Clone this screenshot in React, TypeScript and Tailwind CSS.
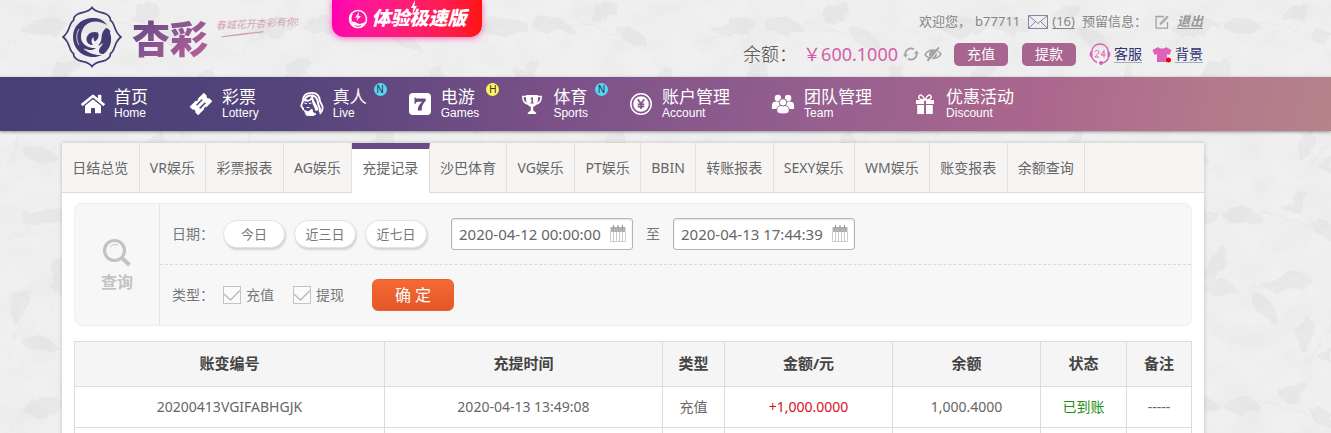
import { useState } from 'react';
import type { ReactNode } from 'react';
import { FaHome, FaEyeSlash } from 'react-icons/fa';

const HomeIcon = () => <FaHome className="h-6 w-6" />;

const TicketIcon = () => (
  <svg viewBox="0 0 24 24" className="h-6 w-6">
    <g transform="rotate(-45 12 12)">
      <path
        fill="currentColor"
        fillRule="evenodd"
        d="M2 6h8.500a1.600 1.600 0 0 0 3 0H22v4.200a1.900 1.900 0 0 0 0 3.600V18h-8.500a1.600 1.600 0 0 0-3 0H2v-4.200a1.900 1.900 0 0 0 0-3.600zM8 9v1.500h8V9zm0 4.400v1.500h8v-1.500z"
      />
    </g>
  </svg>
);

const LadyIcon = () => (
  <svg viewBox="0 0 26 28" className="h-[26px] w-[26px]" fill="none" stroke="currentColor" strokeLinecap="round">
    <path d="M3 11C3 5 7 2 13 2c6 0 8 4 8.500 8 .5 4 3.500 5 3 9-.2 2-1.500 4-2.500 5" strokeWidth="2" />
    <path d="M5 10c1-4 5-5.500 9-5 4 .6 5 4 5.500 8s3 5 2 9" strokeWidth="2.200" />
    <path d="M6 10c3 1 6-.5 7-3 1 6 5 8 6 13" strokeWidth="2.200" />
    <path d="M3 11c-.5 3-2.500 4-1.200 6 .4 1.500 2 1 1.700 3M14 11c.5 4 3 6 3.500 9.500" strokeWidth="2" />
    <path d="M5 13l2 .5M10 13.500l2-.5M7.500 17.800h2.500" strokeWidth="1.200" />
    <path d="M5 21l4 1.500 4-3 .8 3.500 3.500 2-3 1.500-7-.2z" fill="currentColor" strokeWidth="1" />
  </svg>
);

const SevenIcon = () => (
  <svg viewBox="0 0 22 22" className="h-[22px] w-[22px]">
    <rect width="22" height="22" rx="4" fill="currentColor" />
    <path fill="#6b4a80" d="M5.500 4.500h1l.6 1h9.600v2.300c-3 2.900-4 5.600-4 9.700H8.700c0-4 2-6.400 4.500-8.800H8.500c-1 0-1.600.7-1.900 2H5.500z" />
  </svg>
);

const TrophyIcon = () => (
  <svg viewBox="0 0 22 22" className="h-[22px] w-[22px]" fill="currentColor">
    <path d="M5 2h12v4.500c0 4-2 6.500-4.800 7.300v3.400c0 1 2.300.8 3.300 3.800H6.500c1-3 3.300-2.800 3.300-3.800v-3.400C7 13 5 10.500 5 6.500z" />
    <path d="M5.500 3.500H1.800c0 4.500 2 7 5.200 7.500M16.500 3.500h3.700c0 4.500-2 7-5.200 7.500" fill="none" stroke="currentColor" strokeWidth="1.500" />
    <path d="M9.600 5.200l1.400-.9h.9v5.200h.9v.9H9.500v-.9h.9V5.800l-.8.300z" fill="#7b5188" />
  </svg>
);

const CoinIcon = () => (
  <svg viewBox="0 0 24 24" className="h-6 w-6">
    <circle cx="12" cy="12" r="10.200" fill="none" stroke="currentColor" strokeWidth="1.500" />
    <circle cx="12" cy="12" r="7.800" fill="currentColor" />
    <path d="M8.700 7.200l3.300 4.600 3.300-4.600M12 11.800v5.200M8.700 12.300h6.600M8.700 14.600h6.600" fill="none" stroke="#845589" strokeWidth="1.700" />
  </svg>
);

const TeamIcon = () => (
  <svg viewBox="0 0 26 22" className="h-[22px] w-6" fill="currentColor">
    <circle cx="7.500" cy="4.500" r="3.500" />
    <circle cx="18.500" cy="4.500" r="3.500" />
    <path d="M1 16.500V12c0-2.500 2-3.700 5-3.700 3.500 0 4 1 4 3.500v4.700zM25 16.500V12c0-2.500-2-3.700-5-3.700-3.500 0-4 1-4 3.500v4.700z" />
    <g stroke="#8f5a8f" strokeWidth="1">
      <path d="M6.300 18.500c0-4.500 2-6 6.700-6s6.700 1.500 6.700 6c0 2.200-3 3.200-6.700 3.200s-6.700-1-6.700-3.200z" />
      <circle cx="13" cy="9.200" r="4" />
    </g>
  </svg>
);

const GiftIcon = () => (
  <svg viewBox="0 0 20 22" className="h-[22px] w-5" fill="currentColor">
    <path d="M1 7h8v4H1zM11 7h8v4h-8zM2.200 12h6.800v9H2.200zM11 12h6.800v9H11z" />
    <path d="M9.600 7C4 7 3.300 4.800 4 3.200 5 1 8.500 1.800 9.600 7zM10.400 7c5.600 0 6.300-2.200 5.600-3.800C15 1 11.500 1.800 10.400 7z" fill="none" stroke="currentColor" strokeWidth="1.500" />
  </svg>
);

type NavItem = { title: string; sub: string; icon: ReactNode; tag?: 'N' | 'H' };

const navItems: NavItem[] = [
  { title: '首页', sub: 'Home', icon: <HomeIcon /> },
  { title: '彩票', sub: 'Lottery', icon: <TicketIcon /> },
  { title: '真人', sub: 'Live', icon: <LadyIcon />, tag: 'N' },
  { title: '电游', sub: 'Games', icon: <SevenIcon />, tag: 'H' },
  { title: '体育', sub: 'Sports', icon: <TrophyIcon />, tag: 'N' },
  { title: '账户管理', sub: 'Account', icon: <CoinIcon /> },
  { title: '团队管理', sub: 'Team', icon: <TeamIcon /> },
  { title: '优惠活动', sub: 'Discount', icon: <GiftIcon /> },
];

const tabs = [
  '日结总览', 'VR娱乐', '彩票报表', 'AG娱乐', '充提记录', '沙巴体育', 'VG娱乐',
  'PT娱乐', 'BBIN', '转账报表', 'SEXY娱乐', 'WM娱乐', '账变报表', '余额查询',
];

const columns = [
  { label: '账变编号', width: 'w-[310px]' },
  { label: '充提时间', width: 'w-[278px]' },
  { label: '类型', width: 'w-[62px]' },
  { label: '金额/元', width: 'w-[168px]' },
  { label: '余额', width: 'w-[148px]' },
  { label: '状态', width: 'w-[86px]' },
  { label: '备注', width: 'w-[65px]' },
];

const records = [
  {
    id: '20200413VGIFABHGJK',
    time: '2020-04-13 13:49:08',
    type: '充值',
    amount: '+1,000.0000',
    balance: '1,000.4000',
    status: '已到账',
    remark: '-----',
  },
];

// pale leaves behind the whole page
const LeafBackground = () => (
  <svg className="absolute inset-0 -z-10 h-full w-full" aria-hidden="true">
    <defs>
      <filter id="marble" x="0" y="0" width="100%" height="100%">
        <feTurbulence type="fractalNoise" baseFrequency="0.03 0.04" numOctaves="5" seed="8" />
        <feColorMatrix values="0 0 0 0 0.6  0 0 0 0 0.6  0 0 0 0 0.6  0.9 0 0 0 -0.32" />
      </filter>
      <filter id="rough" x="0" y="0" width="100%" height="100%">
        <feTurbulence type="fractalNoise" baseFrequency="0.06" numOctaves="3" seed="3" />
        <feDisplacementMap in="SourceGraphic" scale="14" />
      </filter>
      <pattern id="leaves" width="230" height="190" patternUnits="userSpaceOnUse">
        <g fill="#e2e2e2">
          <path d="M20 30c14-18 36-16 50-4-16 12-36 14-50 4zM72 26c12-14 32-12 42 4-16 6-32 6-42-4z" />
          <path d="M132 20c2-12 12-20 26-16 0 14-12 22-26 16zM158 30c14-6 28 2 30 18-14 2-26-4-30-18z" />
          <path d="M52 92c-4-18 8-32 26-34 2 18-8 30-26 34zM50 96c12-10 30-8 38 4-14 8-30 8-38-4z" />
          <path d="M112 96c12-16 34-18 48-8-12 14-32 18-48 8zM104 104c14 0 22 12 20 26-14-2-22-12-20-26z" />
          <path d="M14 134c-8-14-2-28 12-36 8 14 4 28-12 36zM20 150c14-8 30-4 38 8-14 8-30 4-38-8z" />
          <path d="M152 162c-8-12-6-26 8-34 8 12 4 26-8 34zM166 166c8-12 26-14 38-4-8 12-24 14-38 4z" />
          <path d="M200 100c-8-14-4-28 10-34 8 12 4 26-10 34z" />
        </g>
        <path d="M10 50Q60 10 120 24T190 50M50 120Q60 90 84 56M90 100Q130 100 165 84M10 170Q20 130 30 94M150 180Q180 150 212 64" fill="none" stroke="#e6e6e6" strokeWidth="1.500" />
      </pattern>
    </defs>
    <rect width="100%" height="100%" fill="#f0f0f0" />
    <g filter="url(#rough)" opacity="0.500">
      <rect width="100%" height="100%" fill="url(#leaves)" />
    </g>
    <rect width="100%" height="100%" filter="url(#marble)" opacity="0.300" />
  </svg>
);

const Emblem = () => (
  <svg viewBox="0 0 60 62" className="h-[62px] w-[60px]" fill="none">
    <path
      stroke="#453a74"
      strokeWidth="1.700"
      d="M30 1.500C34 7 39 5.500 44 8c3 1.500 4.500 4 4.500 6.500 5 3 3 11 10.500 16.500-7.500 5.500-5.500 13.500-10.500 16.500 0 2.500-1.500 5-4.500 6.500-5 2.500-10 1-14 6.500-4-5.500-9-4-14-6.500-3-1.500-4.500-4-4.500-6.500C6.500 44.500 8.500 36.500 1 31c7.500-5.500 5.500-13.500 10.500-16.500 0-2.500 1.500-5 4.500-6.500 5-2.500 10-1 14-6.500z"
    />
    <path
      fill="#453a74"
      d="M45 19C41 13 35 11.500 29 12 18 13 11 21 11 31c0 11 8 19 18 20 4 .3 8-.5 11-2-8 .5-14-2-18-7 5 3 9 2.500 12 0-7 .5-12-2.500-14.500-7.500-2-9 2.500-16.500 10-18.500 5-1.500 10 0 15.500 3z"
    />
    <path
      fill="#453a74"
      d="M36 26.500c-6-2-12 1.500-11.500 7.500.5 3 3 5 6.500 5-2-2.500-2-6 .5-8-.2 2 .3 3.500 1.500 4.500 3-2 4.500-5 3-9z"
    />
    <path
      fill="#453a74"
      d="M44 22c2.500.5 4 2 4.300 3.500-.8 1.500.4 3 .7 5 .8 7-2 13.500-7.500 17.500-3 .5-5-1-4.500-4 .8-3 3-4 4-7-2 1.200-3.500 3-5 2.500 2-2 3.500-4.500 3.500-8 .2-4 1.500-7 4.500-9.500z"
    />
    <path d="M22 43c5 4 10 5 15 2M17 23c-3 5-3 11 0 16" stroke="#efeff1" strokeWidth="0.800" />
  </svg>
);

const Header = () => (
  <header className="flex h-[77px] shrink-0 items-start pr-32 pl-[62px]">
    <a href="#" className="flex shrink-0 items-start" aria-label="杏彩">
      <span className="pt-[6px]">
        <Emblem />
      </span>
      <span className="ml-[10px] bg-linear-to-br from-[#50407a] via-[#8a5590] to-[#c0629c] bg-clip-text pt-3 text-[38px] leading-[52px] font-black text-transparent">
        杏彩
      </span>
      <span className="mt-[17px] ml-2 flex w-[86px] -rotate-3 flex-col font-['Liberation_Serif','Noto_Sans_CJK_SC',serif] text-[10px] leading-[14px] text-[#d3a3b4] italic">
        春城花开杏彩有你!
        <svg viewBox="0 0 44 5" className="ml-1 h-[5px] w-11">
          <path d="M1 4C14 2 28 1.500 43 1 30 2.500 16 2.500 1 4z" fill="#d3a3b4" stroke="#d3a3b4" />
        </svg>
      </span>
    </a>

    <a
      href="#"
      className="ml-[30px] flex h-[37px] w-[150px] shrink-0 items-center justify-center gap-1 rounded-b-xl bg-linear-to-r from-[#ff00b0] to-[#ff1408] text-[19px] font-black text-white italic shadow-[0_1px_6px_#ff5db8]"
    >
      <svg viewBox="0 0 20 20" className="h-5 w-5">
        <circle cx="10" cy="10" r="8.500" fill="none" stroke="#fff" strokeWidth="1.500" />
        <path d="M2 13c3-1 5 0 8 1.500S16 13 18 13c-1 4-4 6-8 6s-7-2-8-6z" fill="#fff" />
        <path d="M3 4c-2 3-2.500 6-1 9l2-1c-1-3-.5-5 1-7z" fill="#fff" />
        <path d="M11 3L7 8.500h2.500L8.500 12 13 7h-2.500z" fill="#fff" />
        <path d="M7 16.500c2 1 4 1 6 0" stroke="#ff1a90" fill="none" />
      </svg>
      <span className="relative">
        体验极速版
        <svg viewBox="0 0 8 16" className="absolute -top-1 left-[38px] h-4 w-2" fill="#fff">
          <path d="M5 0L1 8h2.500L2 15l5-9H4.500z" />
        </svg>
      </span>
    </a>

    <div className="ml-auto flex shrink-0 flex-col items-end pt-3">
      <div className="flex h-5 items-center text-[13px] text-[#858585]">
        <span>欢迎您，</span>
        <span className="mr-2 ml-1">b77711</span>
        <a href="#" className="mr-[7px] flex items-center gap-1">
          <svg viewBox="0 0 20 14" className="h-[14px] w-5" fill="none" stroke="#8583a8">
            <path d="M.5.5h19v13H.5zM.5.5L10 8.500l9.500-8M.5 13.500l7-7M19.500 13.500l-7-7" />
          </svg>
          <span className="underline underline-offset-2">(16)</span>
        </a>
        <span>预留信息：</span>
        <a href="#" aria-label="编辑" className="mx-2">
          <svg viewBox="0 0 14 14" className="h-[14px] w-[14px]" fill="none" stroke="#a2a2a2" strokeWidth="1.300">
            <path d="M9 1.500H1v11.700h11.500V7" />
            <path d="M5 9.500l.6-2.200L12 1l1.300 1.300-6.200 6.500z" fill="#b5b5b5" strokeWidth="0.800" />
          </svg>
        </a>
        <a href="#" className="font-bold text-[#979797] italic underline underline-offset-2">
          退出
        </a>
      </div>
      <div className="mt-2 flex h-7 items-center">
        <span className="text-[18px] font-light text-[#444]">余额：</span>
        <span className="ml-[6px] text-[18px] text-[#d55ea8]">￥600.1000</span>
        <button type="button" aria-label="刷新" className="ml-[5px]">
          <svg viewBox="0 0 16 16" className="h-4 w-4" fill="none" stroke="#a3a3a3" strokeWidth="1.800">
            <path d="M2.500 9.500A5.700 5.700 0 0 1 11 3.300M13.500 6.500A5.700 5.700 0 0 1 5 12.700" />
            <path d="M0 8.500h5L2.500 11.500zM11 7.500h5L13.500 4.500z" fill="#a3a3a3" stroke="none" />
          </svg>
        </button>
        <button type="button" aria-label="隐藏余额" className="mr-3 ml-[5px]">
          <svg viewBox="0 0 18 16" className="h-4 w-[18px]" fill="none" stroke="#a3a3a3">
            <path d="M1 8.500C5 2.500 13 2.500 17 8c-4 6-12 6-16 .5z" strokeWidth="1.400" />
            <circle cx="9" cy="8.200" r="3.500" fill="#a3a3a3" />
            <path d="M3.500 15L15 1.500" strokeWidth="2" />
            <path d="M5 15.500L16.500 2" stroke="#f0f0f0" />
          </svg>
        </button>
        <button type="button" className="mr-[14px] h-[23px] w-[54px] rounded-[5px] bg-[#a8658f] text-sm leading-none text-white">
          充值
        </button>
        <button type="button" className="mr-[13px] h-[23px] w-[54px] rounded-[5px] bg-[#a8658f] text-sm leading-none text-white">
          提款
        </button>
        <a href="#" className="mr-[10px] flex items-center gap-[3px] text-sm leading-4 text-[#2e3273]">
          <svg viewBox="0 0 22 22" className="h-[22px] w-[22px]" fill="none" stroke="#d95fb4">
            <path d="M3 8C3.500 3.500 7 1 11 1s7.500 2.500 8 7M19.500 14.500c-1 3.500-3.500 5-6.500 5.500M3 14.500C4 17 5.500 18.500 8 19.500" strokeWidth="1.400" />
            <path d="M3 8C.5 8.500.5 14 3 14.500zM19 8c2.500.5 2.500 6 0 6.500z" fill="#d95fb4" />
            <circle cx="12" cy="20" r="1.500" fill="#d95fb4" />
            <path d="M6 9c0-2 4-2 4 0 0 1.500-3 3-4 5h4M15 14.500V7.500l-3 4.500h4.500" />
          </svg>
          <span className="border-b border-[#a8a8b8]">客服</span>
        </a>
        <a href="#" className="flex items-center gap-[3px] text-sm leading-4 text-[#2e3273]">
          <svg viewBox="0 0 20 17" className="h-[17px] w-5">
            <path d="M6 1c1.500 2 6.500 2 8 0l5.500 3-2 5-2.500-1v8H5V8L2.500 9l-2-5z" fill="#dd63b8" />
            <circle cx="16.500" cy="14" r="2.500" fill="#e60012" />
          </svg>
          <span className="border-b border-[#a8a8b8]">背景</span>
        </a>
      </div>
    </div>
  </header>
);

const Nav = () => (
  <nav className="flex h-[54px] shrink-0 items-center gap-[41px] bg-[linear-gradient(100deg,#474077_0%,#54447a_22%,#7b5188_42%,#96608f_62%,#ab678e_78%,#b3788c_90%,#b5838a_100%)] pl-[81px] text-white shadow-[0_1px_3px_rgba(0,0,0,0.4)]">
    {navItems.map((item) => (
      <a key={item.sub} href="#" className="relative flex shrink-0 items-center gap-[9px]">
        <span className="flex w-6 items-center justify-center">{item.icon}</span>
        <span className="flex flex-col">
          <span className="text-[17px] leading-[18px]">{item.title}</span>
          <span className="font-['Liberation_Sans',sans-serif] text-xs leading-[14px]">{item.sub}</span>
        </span>
        {item.tag && (
          <span
            className={`absolute -top-[5px] left-full ml-[7px] flex h-[13px] w-[13px] items-center justify-center rounded-full font-['Liberation_Sans',sans-serif] text-[10px] leading-none text-[#333] ${
              item.tag === 'N' ? 'bg-[#57d3f5]' : 'bg-[#fcf75a]'
            }`}
          >
            {item.tag}
          </span>
        )}
      </a>
    ))}
  </nav>
);

const DateField = ({ label, value, onChange }: { label: string; value: string; onChange: (v: string) => void }) => (
  <span className="relative">
    <input
      type="text"
      aria-label={label}
      value={value}
      onChange={(e) => onChange(e.target.value)}
      className="h-8 w-[182px] rounded-[3px] border border-[#b4b4b4] bg-white px-[7px] text-[15px] text-[#666] shadow-[inset_0_1px_2px_#e4e4e4]"
    />
    <svg viewBox="0 0 16 17" className="absolute top-[7px] right-[7px] h-[17px] w-4">
      <path d="M.5 2h15v5H.5z" fill="#b2b2b2" />
      <path d="M3.500 0v4M8 0v4M12.500 0v4" stroke="#999" strokeWidth="1.200" />
      <path d="M.5 7v9.500h15V7M3.500 7v9M6.500 7v9M9.500 7v9M12.500 7v9" fill="none" stroke="#cdcdcd" />
    </svg>
  </span>
);

const CheckField = ({ label }: { label: string }) => {
  const [checked, setChecked] = useState(true);
  return (
    <label className="flex items-center gap-[5px]">
      <span className="relative h-[18px] w-[18px]">
        <input
          type="checkbox"
          checked={checked}
          onChange={(e) => setChecked(e.target.checked)}
          className="block h-[18px] w-[18px] appearance-none border border-[#c4c4c4] bg-[#fafafa]"
        />
        {checked && (
          <svg viewBox="0 0 18 18" className="pointer-events-none absolute inset-0 h-[18px] w-[18px]">
            <path d="M1 8l6.500 6L17 4.500" fill="none" stroke="#b9b9b9" strokeWidth="1.300" />
          </svg>
        )}
      </span>
      {label}
    </label>
  );
};

const SearchPanel = () => {
  const [from, setFrom] = useState('2020-04-12 00:00:00');
  const [to, setTo] = useState('2020-04-13 17:44:39');

  return (
    <form className="flex rounded-lg border border-[#eee] bg-[#f7f7f7] text-sm text-[#777]" onSubmit={(e) => e.preventDefault()}>
      <div className="flex w-[85px] shrink-0 flex-col items-center justify-center border-r border-[#e4e4e4] text-base leading-5 font-bold text-[#c3c3c3]">
        <svg viewBox="0 0 30 30" className="mb-1 h-[30px] w-[30px]" fill="none" stroke="#c3c3c3">
          <circle cx="12.500" cy="12.500" r="10" strokeWidth="3.200" />
          <path d="M20 20l7.500 7" strokeWidth="4" />
          <path d="M8 9c2-2.500 5-3 8-2" />
        </svg>
        查询
      </div>
      <div className="grow">
        <div className="flex h-[61px] items-center border-b border-dashed border-[#d9d9d9] pl-3">
          <span className="mr-[9px]">日期：</span>
          <div className="mr-6 flex gap-[9px] text-[13px]">
            {['今日', '近三日', '近七日'].map((day) => (
              <button
                key={day}
                type="button"
                className="h-7 w-[62px] rounded-full border border-[#e2e2e2] bg-white shadow-[1px_2px_2px_#d2d2d2]"
              >
                {day}
              </button>
            ))}
          </div>
          <DateField label="开始时间" value={from} onChange={setFrom} />
          <span className="mx-[13px]">至</span>
          <DateField label="结束时间" value={to} onChange={setTo} />
        </div>
        <div className="flex h-[60px] items-center pl-3">
          <span className="mr-[9px]">类型：</span>
          <div className="mr-7 flex gap-[19px]">
            <CheckField label="充值" />
            <CheckField label="提现" />
          </div>
          <button
            type="submit"
            className="h-8 w-[82px] rounded-md border border-[#e8622f] bg-linear-to-b from-[#f56a33] to-[#e45628] text-base leading-none text-white"
          >
            确 定
          </button>
        </div>
      </div>
    </form>
  );
};

const RecordTable = () => (
  <table className="w-full table-fixed border-collapse text-center text-sm text-[#666]">
    <thead>
      <tr className="h-[45px] bg-[#f5f5f5] text-[15px] text-[#444]">
        {columns.map((col) => (
          <th key={col.label} className={`border border-[#dcdcdc] font-bold ${col.width}`}>
            {col.label}
          </th>
        ))}
      </tr>
    </thead>
    <tbody>
      {records.map((row) => (
        <tr key={row.id} className="h-[41px]">
          <td className="border border-[#dcdcdc]">{row.id}</td>
          <td className="border border-[#dcdcdc]">{row.time}</td>
          <td className="border border-[#dcdcdc]">{row.type}</td>
          <td className="border border-[#dcdcdc] text-[#d2121a]">{row.amount}</td>
          <td className="border border-[#dcdcdc]">{row.balance}</td>
          <td className="border border-[#dcdcdc] text-[#1f8f12]">{row.status}</td>
          <td className="border border-[#dcdcdc]">{row.remark}</td>
        </tr>
      ))}
      <tr className="h-[41px]">
        {columns.map((col) => (
          <td key={col.label} className="border border-[#dcdcdc]" />
        ))}
      </tr>
    </tbody>
  </table>
);

export default function App() {
  const [active, setActive] = useState('充提记录');

  return (
    <div className="relative isolate flex h-screen flex-col overflow-hidden font-['Noto_Sans','Noto_Sans_CJK_SC',sans-serif]">
      <LeafBackground />
      <Header />
      <Nav />
      <main className="mt-3 mr-[127px] ml-[62px] grow bg-white shadow-[0_0_4px_rgba(0,0,0,0.2)]">
        <div className="border-b border-[#dedcdb] bg-[#f7f5f4]">
          <div className="flex h-[49px] w-[1023px] text-sm">
            {tabs.map((tab) => (
              <button
                key={tab}
                type="button"
                onClick={() => setActive(tab)}
                className={
                  tab === active
                    ? '-mb-px grow border-t-[6px] border-r border-t-[#6b4c85] border-r-[#e2e0df] bg-white px-[10px] pb-[6px] text-[#666]'
                    : 'grow border-r border-[#e2e0df] px-[10px] text-[#666]'
                }
              >
                {tab}
              </button>
            ))}
          </div>
        </div>
        <div className="flex flex-col gap-[15px] px-3 pt-[10px]">
          <SearchPanel />
          <RecordTable />
        </div>
      </main>
    </div>
  );
}
